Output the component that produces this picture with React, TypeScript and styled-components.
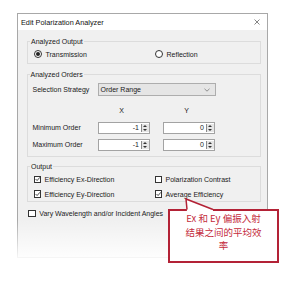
import React from "react";
import styled, { createGlobalStyle } from "styled-components";

const GlobalStyle = createGlobalStyle`
  html, body {
    margin: 0;
    padding: 0;
    background: #fff;
  }
  body {
    font-family: "Liberation Sans", Arial, sans-serif;
    color: #1a1a1a;
  }
  * {
    box-sizing: border-box;
  }
`;

const Page = styled.div`
  position: relative;
  width: 293px;
  height: 281px;
  padding: 13px 0 0 17px;
`;

const Dialog = styled.div`
  position: relative;
  width: 251px;
  height: 245px;
  border: 1px solid #a8a8a8;
  background: #f0f0f0;
  display: flex;
  flex-direction: column;
`;

const TitleBar = styled.div`
  height: 16px;
  background: #fff;
  display: flex;
  align-items: center;
  justify-content: space-between;
  padding: 0 7px 0 3px;
  font-size: 7.3px;
  color: #111;
`;

const Body = styled.div`
  padding: 7px 6px 0 9px;
  font-size: 7px;
`;

const Fade = styled.div`
  position: absolute;
  left: -1px;
  right: -1px;
  bottom: -1px;
  height: 38px;
  background: linear-gradient(to bottom, rgba(255, 255, 255, 0), rgba(255, 255, 255, 0.9) 100%);
`;

const Group = styled.fieldset<{ $pad: string; $gap?: number }>`
  margin: 0 0 ${p => p.$gap ?? 0}px;
  padding: ${p => p.$pad};
  border: 1px solid #dcdcdc;
  min-width: 0;
`;

const Legend = styled.legend`
  padding: 0 1px;
  margin-left: -3px;
  font-size: 7px;
  line-height: 9px;
`;

const TwoCols = styled.div<{ $gap?: number }>`
  display: grid;
  grid-template-columns: 121px 1fr;
  row-gap: ${p => p.$gap ?? 0}px;
`;

const Option = styled.label<{ $offset?: number }>`
  display: flex;
  align-items: center;
  height: 10px;
  gap: 3.5px;
  margin-left: ${p => p.$offset ?? 0}px;
  white-space: nowrap;
`;

const RadioDot = styled.span<{ $on?: boolean }>`
  width: 8px;
  height: 8px;
  border-radius: 50%;
  border: 1px solid #333;
  background: #fff;
  display: flex;
  align-items: center;
  justify-content: center;
  &::after {
    content: "";
    width: 4px;
    height: 4px;
    border-radius: 50%;
    background: ${p => (p.$on ? "#222" : "transparent")};
  }
`;

const Box = styled.span`
  width: 7.5px;
  height: 7.5px;
  border: 1px solid #333;
  background: #fff;
  display: flex;
  align-items: center;
  justify-content: center;
`;

const Row = styled.div<{ $top?: number }>`
  display: flex;
  align-items: center;
  margin-top: ${p => p.$top ?? 0}px;
`;

const Cells = styled.div`
  display: grid;
  grid-template-columns: 52px 52px;
  column-gap: 13px;
  align-items: center;
`;

const FieldLabel = styled.span`
  width: 65px;
  flex: none;
  white-space: nowrap;
`;

const Select = styled.div`
  width: 118px;
  height: 12.5px;
  background: #e5e5e5;
  border: 1px solid #adadad;
  display: flex;
  align-items: center;
  justify-content: space-between;
  padding: 0 5px 0 2px;
`;

const ColHead = styled.span`
  text-align: center;
  padding-right: 4px;
  line-height: 9px;
`;

const Spinner = styled.div`
  height: 12px;
  display: flex;
  border: 1px solid #a3a3a3;
  background: #fff;
`;

const SpinValue = styled.span`
  flex: 1;
  text-align: right;
  padding-right: 1.5px;
  line-height: 10px;
`;

const SpinButtons = styled.div`
  width: 8px;
  margin: 1px 0;
  border-left: 1px solid #8a8a8a;
  background: #e6e6e6;
  display: flex;
  flex-direction: column;
  align-items: center;
  justify-content: space-around;
`;

const Arrow = styled.span<{ $up?: boolean }>`
  width: 0;
  height: 0;
  border-left: 2px solid transparent;
  border-right: 2px solid transparent;
  ${p => (p.$up ? "border-bottom: 2px solid #333;" : "border-top: 2px solid #333;")}
`;

const Footer = styled.div`
  margin-top: 6.3px;
`;

const Callout = styled.div`
  position: absolute;
  left: 168px;
  top: 209px;
  width: 111px;
  height: 54px;
  border: 2px solid #b32236;
  background: #fff;
  padding-top: 1px;
  text-align: center;
  font-family: "Noto Sans CJK SC", sans-serif;
  font-size: 9.5px;
  line-height: 13.5px;
  color: #c42b3c;
`;

const Tail = styled.svg`
  position: absolute;
  left: 180px;
  top: 196px;
  overflow: visible;
`;

const Check = () => (
  <svg width="6" height="6" viewBox="0 0 6 6">
    <polyline points="0.6,3 2.3,4.7 5.4,1.1" fill="none" stroke="#222" strokeWidth="0.9" />
  </svg>
);

const CheckOption = ({ label, checked, offset }: { label: string; checked?: boolean; offset?: number }) => (
  <Option $offset={offset}>
    <Box>{checked && <Check />}</Box>
    {label}
  </Option>
);

const SpinBox = ({ value }: { value: string }) => (
  <Spinner>
    <SpinValue>{value}</SpinValue>
    <SpinButtons>
      <Arrow $up />
      <Arrow />
    </SpinButtons>
  </Spinner>
);

export default function App() {
  return (
    <Page>
      <GlobalStyle />
      <Dialog>
        <TitleBar>
          <span>Edit Polarization Analyzer</span>
          <svg width="6" height="6" viewBox="0 0 6 6">
            <path d="M0.5 0.5 L5.5 5.5 M5.5 0.5 L0.5 5.5" stroke="#666" strokeWidth="0.8" />
          </svg>
        </TitleBar>
        <Body>
          <Group $pad="3px 5px 4px" $gap={5.5}>
            <Legend>Analyzed Output</Legend>
            <TwoCols>
              <Option $offset={1}>
                <RadioDot $on />
                Transmission
              </Option>
              <Option $offset={1}>
                <RadioDot />
                Reflection
              </Option>
            </TwoCols>
          </Group>

          <Group $pad="4.8px 5px 5.5px 4.5px" $gap={5.2}>
            <Legend>Analyzed Orders</Legend>
            <Row>
              <FieldLabel>Selection Strategy</FieldLabel>
              <Select>
                <span>Order Range</span>
                <svg width="6" height="4" viewBox="0 0 6 4">
                  <polyline points="0.5,0.8 3,3.2 5.5,0.8" fill="none" stroke="#777" strokeWidth="0.8" />
                </svg>
              </Select>
            </Row>
            <Row $top={10}>
              <FieldLabel />
              <Cells>
                <ColHead>X</ColHead>
                <ColHead>Y</ColHead>
              </Cells>
            </Row>
            <Row $top={7}>
              <FieldLabel>Minimum Order</FieldLabel>
              <Cells>
                <SpinBox value="-1" />
                <SpinBox value="0" />
              </Cells>
            </Row>
            <Row $top={5}>
              <FieldLabel>Maximum Order</FieldLabel>
              <Cells>
                <SpinBox value="-1" />
                <SpinBox value="0" />
              </Cells>
            </Row>
          </Group>

          <Group $pad="3px 5px 2px">
            <Legend>Output</Legend>
            <TwoCols $gap={4.7}>
              <CheckOption label="Efficiency Ex-Direction" checked offset={0.5} />
              <CheckOption label="Polarization Contrast" offset={0.5} />
              <CheckOption label="Efficiency Ey-Direction" checked offset={0.5} />
              <CheckOption label="Average Efficiency" checked offset={0.5} />
            </TwoCols>
          </Group>

          <Footer>
            <CheckOption label="Vary Wavelength and/or Incident Angles" offset={1.3} />
          </Footer>
        </Body>
        <Fade />
      </Dialog>

      <Callout>
        Ex 和 Ey 偏振入射
        <br />
        结果之间的平均效
        <br />率
      </Callout>
      <Tail width="40" height="20">
        <polygon points="6,3 6.9,13 6.9,15.5 33,15.5 33,13" fill="#fff" />
        <polyline points="7,13.5 6,3 33,13.5" fill="none" stroke="#b32236" strokeWidth="1.5" />
      </Tail>
    </Page>
  );
}
